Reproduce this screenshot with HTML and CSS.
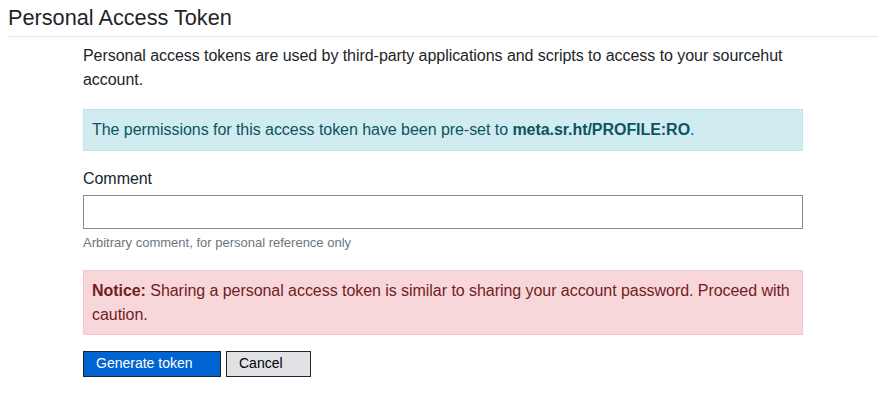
FILE: index.html
```html
<!DOCTYPE html>
<html lang="en">
<head>
  <meta charset="UTF-8">
  <title>Personal Access Token</title>
  <link rel="stylesheet" href="styles.css">
</head>
<body>
  <div class="header">
    <h3>Personal Access Token</h3>
  </div>
  <div class="content">
    <p>Personal access tokens are used by third-party applications and scripts to access to your sourcehut account.</p>
    <div class="alert alert-info">
      The permissions for this access token have been pre-set to <strong>meta.sr.ht/PROFILE:RO</strong>.
    </div>
    <form>
      <div class="form-group">
        <label for="comment">Comment</label>
        <input type="text" id="comment" class="form-control">
        <small class="form-text">Arbitrary comment, for personal reference only</small>
      </div>
      <div class="alert alert-danger">
        <strong>Notice:</strong> Sharing a personal access token is similar to sharing your account password. Proceed with caution.
      </div>
      <div class="buttons">
        <button type="button" class="btn btn-primary">Generate token</button>
        <button type="button" class="btn btn-default">Cancel</button>
      </div>
    </form>
  </div>
</body>
</html>
```

FILE: styles.css
```css
body { font-family: "Liberation Sans", Arial, sans-serif; font-size: 16px; line-height: 1.5; letter-spacing: -0.05px; color: #212529; background: #fff; margin: 0; padding: 0 8px; }
.header { border-bottom: 1px solid #e5e8eb; margin-bottom: 7px; }
.header h3 { font-weight: normal; font-size: 21.7px; line-height: 1.2; letter-spacing: 0; margin: 0; padding: 5px 0 5px 0; }
.content { width: 720px; margin-left: 75px; }
p { margin: 0 0 17px 0; }
.alert { padding: 8px 8px; border: 1px solid transparent; margin-bottom: 16px; }
.alert-info { background: #d1ecf1; border-color: #bee5eb; color: #0c5460; }
.alert-danger { background: #f8d7da; border-color: #f5c6cb; color: #721c24; padding: 8px 8px 7px 8px; }
.form-group { margin-bottom: 17px; }
label { display: block; margin-bottom: 4px; }
.form-control { display: block; box-sizing: border-box; width: 100%; height: 34px; border: 1px solid #888; border-radius: 0; padding: 4px 8px; font: inherit; margin: 0; }
.form-text { display: block; font-size: 13px; color: #6c757d; margin-top: 4px; line-height: 1.5; letter-spacing: 0; }
.buttons { display: flex; gap: 5px; margin-top: 16px; }
.btn { font-family: "Liberation Sans", Arial, sans-serif; font-size: 14px; line-height: 1.2; text-align: left; padding: 3px 12px; height: 26px; border: 1px solid #212529; border-radius: 0; cursor: pointer; }
.btn-primary { background: #0064d2; color: #fff; width: 138px; }
.btn-default { background: #e0e2e5; color: #000; width: 85px; }
```
